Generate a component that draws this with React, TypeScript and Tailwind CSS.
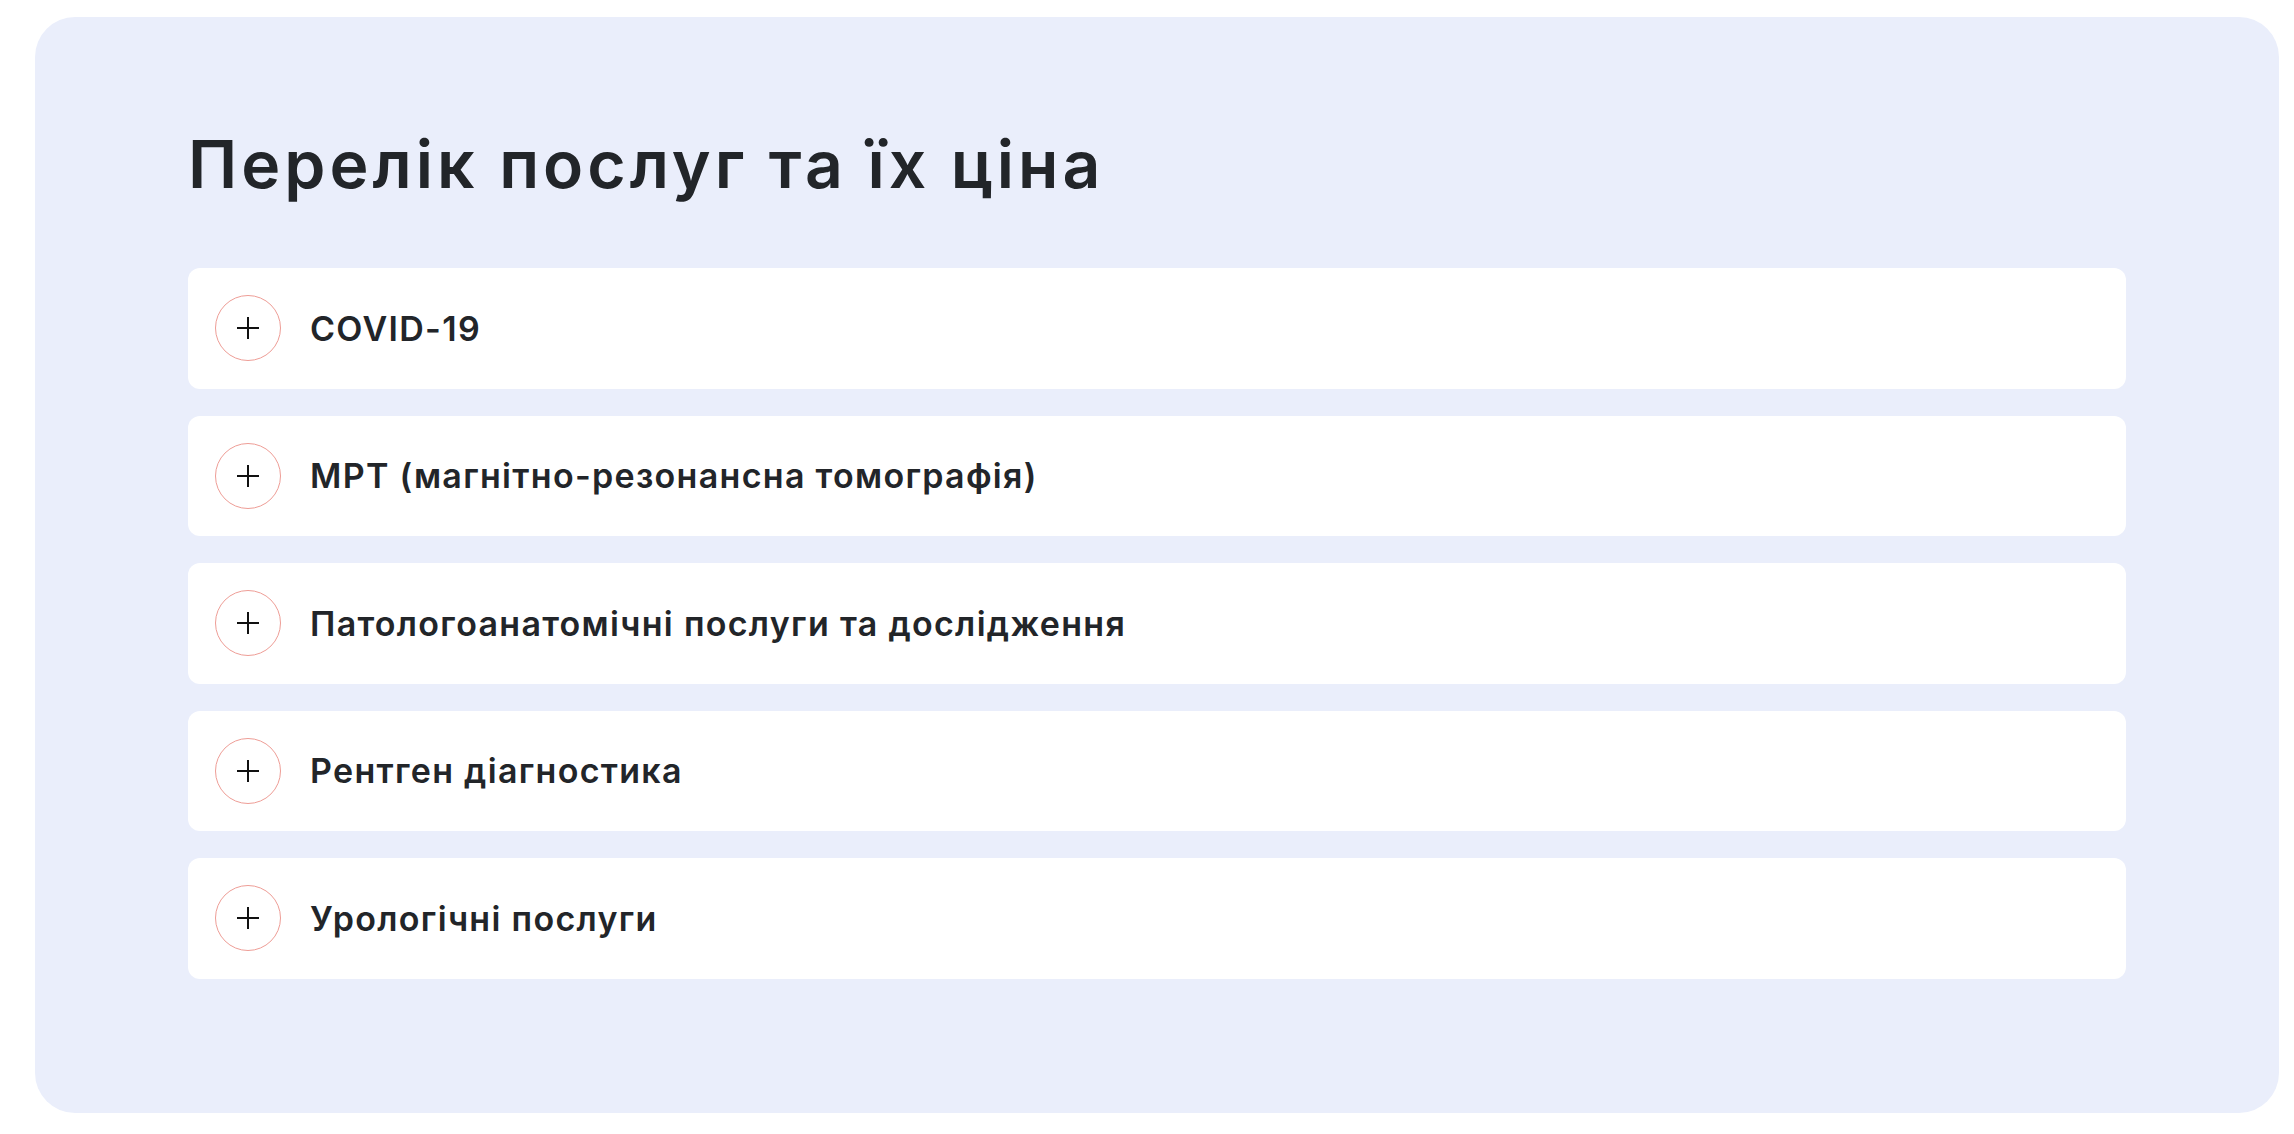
import React from "react";

const items = [
  "COVID-19",
  "МРТ (магнітно-резонансна томографія)",
  "Патологоанатомічні послуги та дослідження",
  "Рентген діагностика",
  "Урологічні послуги",
];

function PlusIcon() {
  return (
    <svg width="24" height="24" viewBox="0 0 24 24" fill="none">
      <path d="M12 1v22M1 12h22" stroke="#111" strokeWidth="2" />
    </svg>
  );
}

export default function App() {
  return (
    <div className="w-full bg-white pt-[17px] pb-[22px] pl-[35px] pr-[15px]" style={{ fontFamily: "Inter, 'Noto Sans', sans-serif" }}>
      <div className="bg-[#eaeefb] rounded-[40px] pt-[114px] pb-[134px] px-[153px]">
        <h1 className="text-[66px] leading-none font-semibold text-[#222529] tracking-[4px] m-0">
          Перелік послуг та їх ціна
        </h1>
        <div className="mt-[71px] flex flex-col gap-[27px]">
          {items.map((t) => (
            <div key={t} className="h-[120.5px] bg-white rounded-[12px] flex items-center pl-[27px]">
              <div className="w-[66px] h-[66px] rounded-full border border-[#ee9d96] flex items-center justify-center shrink-0">
                <PlusIcon />
              </div>
              <span className="ml-[29px] text-[34px] font-semibold tracking-[1.3px] text-[#222529]">{t}</span>
            </div>
          ))}
        </div>
      </div>
    </div>
  );
}
